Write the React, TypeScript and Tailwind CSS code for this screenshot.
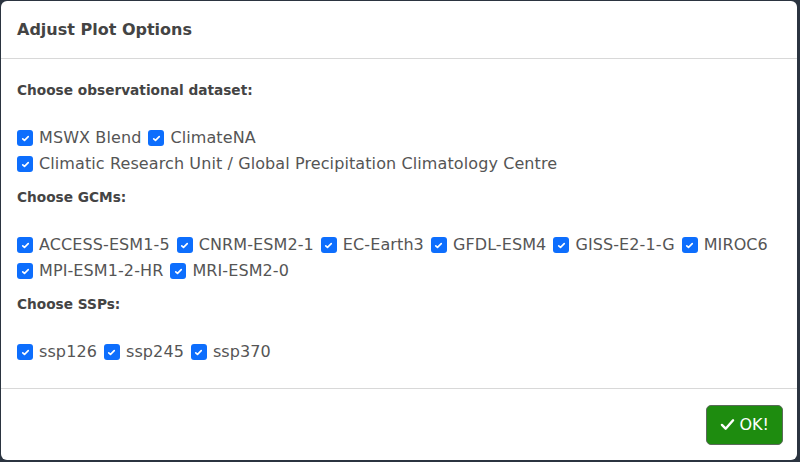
import React, { useState } from "react";

const datasets = [
  "MSWX Blend",
  "ClimateNA",
  "Climatic Research Unit / Global Precipitation Climatology Centre",
];
const gcms = [
  "ACCESS-ESM1-5",
  "CNRM-ESM2-1",
  "EC-Earth3",
  "GFDL-ESM4",
  "GISS-E2-1-G",
  "MIROC6",
  "MPI-ESM1-2-HR",
  "MRI-ESM2-0",
];
const ssps = ["ssp126", "ssp245", "ssp370"];

const Check = ({ label }: { label: string }) => {
  const [on, setOn] = useState(true);
  return (
    <label className="inline-flex items-center mr-[7px] cursor-pointer">
      <span
        onClick={() => setOn(!on)}
        className={`w-4 h-4 rounded-[3px] flex items-center justify-center mr-[6px] ${
          on ? "bg-[#0d6efd]" : "bg-white border border-gray-400"
        }`}
      >
        {on && (
          <svg width="11" height="11" viewBox="0 0 20 20" fill="none">
            <path
              d="M5 10.5l3.2 3L15 6.5"
              stroke="white"
              strokeWidth="3"
              strokeLinecap="round"
              strokeLinejoin="round"
            />
          </svg>
        )}
      </span>
      <span>{label}</span>
    </label>
  );
};

const Section = ({ title, items }: { title: string; items: string[] }) => (
  <div className="mb-[10px]">
    <h6 className="font-bold text-[13.7px] leading-[20px] mt-[1px] mb-[25px] text-[#444]">{title}</h6>
    <div className="flex flex-wrap leading-[26px] text-[16px] tracking-[0.1px]">
      {items.map((i) => (
        <Check key={i} label={i} />
      ))}
    </div>
  </div>
);

export default function App() {
  return (
    <div
      className="w-[800px] h-[462px] bg-[#2b3440] pl-[1px] pt-[1px] pr-[3px] pb-[2px]"
      style={{ fontFamily: '"DejaVu Sans", Verdana, sans-serif' }}
    >
      <div className="h-full bg-white rounded-[6px] flex flex-col text-[#555]">
        {/* Header */}
        <div className="h-[58px] flex items-center px-4 border-b border-[#d8d8d8]">
          <h5 className="font-bold text-[16px] text-[#444]">Adjust Plot Options</h5>
        </div>

        {/* Body */}
        <div className="flex-1 px-4 pt-[20px]">
          <Section title="Choose observational dataset:" items={datasets} />
          <Section title="Choose GCMs:" items={gcms} />
          <Section title="Choose SSPs:" items={ssps} />
        </div>

        {/* Footer */}
        <div className="h-[72px] border-t border-[#d8d8d8] flex items-center justify-end pr-[14px]">
          <button className="h-[40px] px-[13px] rounded-[5px] bg-[#1e8c0f] border border-[#5a6a5a] text-white text-[16px] flex items-center gap-[5px]">
            <svg width="15" height="13" viewBox="0 0 16 14" fill="none">
              <path
                d="M2 7.5l4 4L14 2.5"
                stroke="white"
                strokeWidth="2.6"
                strokeLinecap="round"
                strokeLinejoin="round"
              />
            </svg>
            OK!
          </button>
        </div>
      </div>
    </div>
  );
}
